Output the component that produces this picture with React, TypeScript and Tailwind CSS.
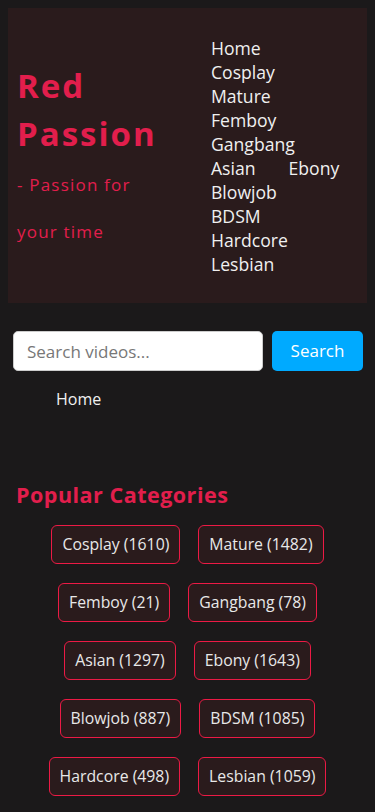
import React from "react";

const cats: [string, number][] = [
  ["Cosplay", 1610],
  ["Mature", 1482],
  ["Femboy", 21],
  ["Gangbang", 78],
  ["Asian", 1297],
  ["Ebony", 1643],
  ["Blowjob", 887],
  ["BDSM", 1085],
  ["Hardcore", 498],
  ["Lesbian", 1059],
];

export default function App() {
  return (
    <div
      className="min-h-[812px] bg-[#1b191a] pt-[8px] text-white"
      style={{ fontFamily: '"Open Sans", "Liberation Sans", sans-serif' }}
    >
      <header className="mx-[8px] flex h-[295px] items-center bg-[#2a1b1c] pl-[9px]">
        <div className="w-[194px] shrink-0 pt-[6px]">
          <h1 className="text-[33px] font-bold leading-[48px] tracking-[2px] text-[#e21e4c]">
            Red
            <br />
            Passion
          </h1>
          <p className="mt-[3px] text-[17px] leading-[47px] tracking-[1.2px] text-[#e21e4c]">
            - Passion for
            <br />
            your time
          </p>
        </div>
        <nav className="flex flex-col text-[17.6px] leading-[24px] text-[#f0f0f0]">
          <a>Home</a>
          <a>Cosplay</a>
          <a>Mature</a>
          <a>Femboy</a>
          <a>Gangbang</a>
          <div className="flex gap-[33px]">
            <a>Asian</a>
            <a>Ebony</a>
          </div>
          <a>Blowjob</a>
          <a>BDSM</a>
          <a>Hardcore</a>
          <a>Lesbian</a>
        </nav>
      </header>

      <div className="mt-[28px] flex gap-[9px] pl-[13px] pr-[12px]">
        <input
          className="h-[40px] w-[250px] rounded-[5px] border border-[#ccc] bg-white px-[13px] text-[17px] text-[#333] placeholder:text-[#777] outline-none"
          placeholder="Search videos..."
        />
        <button className="h-[40px] flex-1 rounded-[5px] bg-[#00aaff] text-[17px] text-white">
          Search
        </button>
      </div>

      <div className="mt-[16px] pl-[56px] text-[16px] leading-[24px] text-[#f0f0f0]">Home</div>

      <section className="mt-[69px] px-[16px]">
        <h2 className="text-[21.5px] font-bold leading-[30px] tracking-[0.5px] text-[#e21e4c]">
          Popular Categories
        </h2>
        <div className="mt-[15px] flex flex-wrap justify-center gap-x-[18px] gap-y-[19px]">
          {cats.map(([n, c]) => (
            <a
              key={n}
              className="rounded-[6px] border border-[#ec1a45] bg-[#2a1b1c] px-[10px] py-[7px] text-[15.8px] leading-[23px] text-[#e8e8e8]"
            >
              {n} ({c})
            </a>
          ))}
        </div>
      </section>
    </div>
  );
}
